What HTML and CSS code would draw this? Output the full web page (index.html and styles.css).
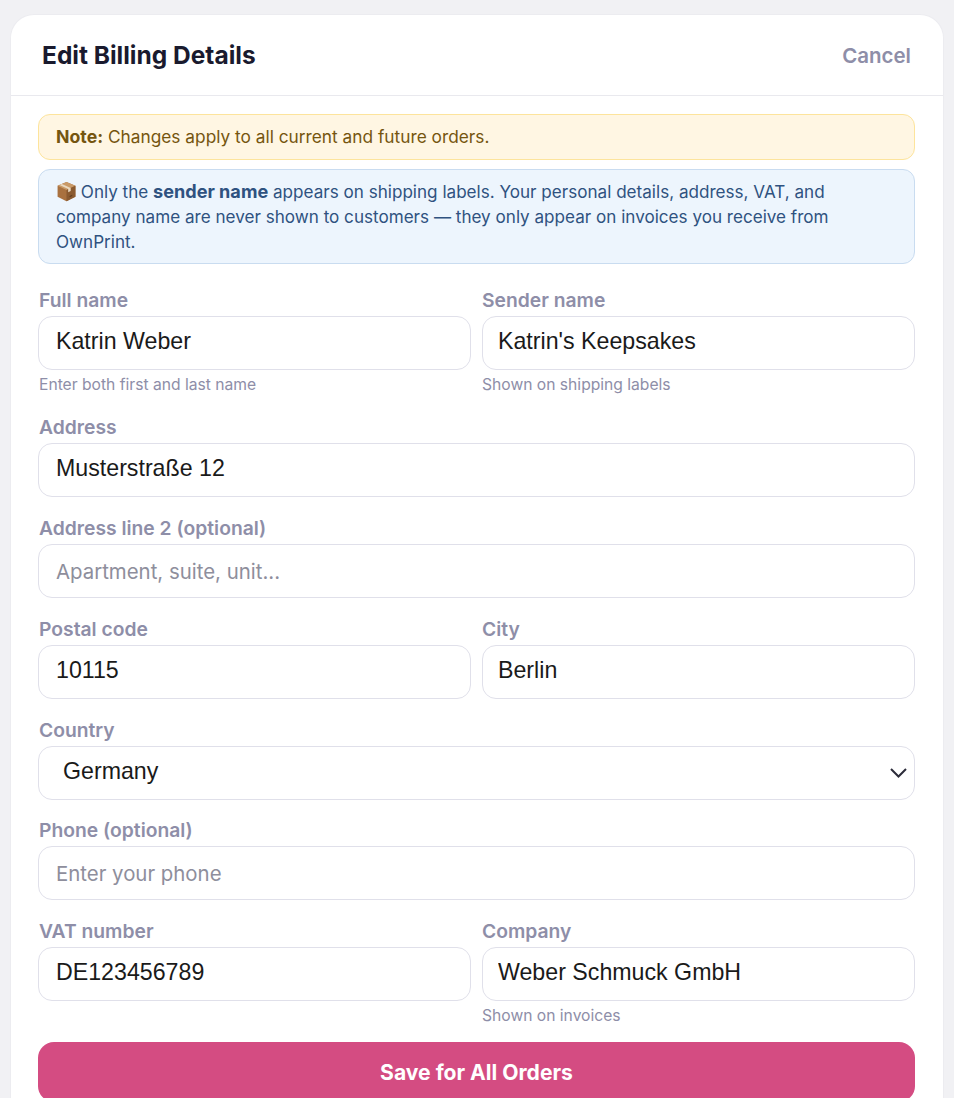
FILE: index.html
```html
<!DOCTYPE html>
<html lang="en">
<head>
<meta charset="utf-8">
<title>Edit Billing Details</title>
<link rel="stylesheet" href="styles.css">
</head>
<body>
<main class="card">
  <header class="head">
    <h1 class="title">Edit Billing Details</h1>
    <button class="cancel" type="button">Cancel</button>
  </header>
  <form class="body">
    <p class="note"><strong>Note:</strong> Changes apply to all current and future orders.</p>
    <p class="info"><svg class="box" viewBox="0 0 20 20" aria-hidden="true"><path d="M10 1 18.5 4.6V15L10 19.4 1.5 15V4.6Z" fill="#a9713f"/><path d="M10 1 18.5 4.6 10 8.6 1.5 4.6Z" fill="#c99a68"/><path d="M10 8.6 18.5 4.6V15L10 19.4Z" fill="#8a5a30"/><path d="M5.6 2.8 14 6.7V9.6L11.6 10.7V7.6L3.4 3.7Z" fill="#ead9c0"/><path d="M13 15.5l2.5-1.2v-1.2L13 14.3Z" fill="#5f3c1f"/></svg> Only the <strong>sender name</strong> appears on shipping labels. Your personal details, address, VAT, and company name are never shown to customers — they only appear on invoices you receive from OwnPrint.</p>

    <div class="row two">
      <div class="field"><label class="label">Full name</label><input class="input" value="Katrin Weber"><small class="hint">Enter both first and last name</small></div>
      <div class="field"><label class="label">Sender name</label><input class="input" value="Katrin's Keepsakes"><small class="hint">Shown on shipping labels</small></div>
    </div>
    <div class="row"><div class="field"><label class="label">Address</label><input class="input" value="Musterstraße 12"></div></div>
    <div class="row"><div class="field"><label class="label">Address line 2 (optional)</label><input class="input" placeholder="Apartment, suite, unit..."></div></div>
    <div class="row two">
      <div class="field"><label class="label">Postal code</label><input class="input" value="10115"></div>
      <div class="field"><label class="label">City</label><input class="input" value="Berlin"></div>
    </div>
    <div class="row tight"><div class="field"><label class="label">Country</label>
      <div class="select-wrap"><select class="input select"><option>Germany</option></select>
      <svg class="chev" viewBox="0 0 17 10" aria-hidden="true"><path d="M1 1 8.5 8.5 16 1" fill="none" stroke="#2c2c3a" stroke-width="2"/></svg></div></div></div>
    <div class="row"><div class="field"><label class="label">Phone (optional)</label><input class="input" placeholder="Enter your phone"></div></div>
    <div class="row two last">
      <div class="field"><label class="label">VAT number</label><input class="input" value="DE123456789"></div>
      <div class="field"><label class="label">Company</label><input class="input" value="Weber Schmuck GmbH"><small class="hint">Shown on invoices</small></div>
    </div>
    <button class="save" type="button">Save for All Orders</button>
  </form>
</main>
</body>
</html>
```
FILE: styles.css
```css
* { box-sizing: border-box; }
html, body { margin: 0; height: 1098px; overflow: hidden; }
body {
  background: #f1f1f4;
  padding: 14px 10px 0;
  font-family: Inter, "Liberation Sans", sans-serif;
}
.card {
  background: #fff;
  border: 1px solid #ececf0;
  border-bottom: 0;
  border-radius: 24px 24px 0 0;
  height: 1100px;
}
.head {
  display: flex;
  justify-content: space-between;
  align-items: center;
  height: 81px;
  padding: 0 32px 0 31px;
  border-bottom: 1px solid #e9e9ee;
}
.title { margin: 0; font-size: 24.5px; font-weight: 700; color: #1a1a2e; }
.cancel {
  border: 0; background: none; padding: 0;
  font: 600 20.5px Inter, sans-serif; color: #8e8ea8;
}
.body { padding: 18px 28px 0 27px; }
.note, .info {
  margin: 0;
  border-radius: 12px;
  line-height: 25px;
  padding: 9px 17px;
}
.note {
  height: 46px;
  font-size: 17.3px;
  background: #fff6e3;
  border: 1px solid #fde49c;
  color: #75550f;
  margin-bottom: 9px;
}
.note strong { font-size: 17.7px; }
.info {
  height: 95px;
  font-size: 17.1px;
  background: #edf5fd;
  border: 1px solid #c9dcf0;
  color: #2f5280;
  margin-bottom: 26px;
}
.info strong { font-size: 18.1px; }
.box { width: 21px; height: 21px; vertical-align: -4px; margin-right: -1px; }
.row { display: flex; gap: 11px; margin-bottom: 21px; }
.row.tight { margin-bottom: 20px; }
.row.last { margin-bottom: 15px; }
.field { flex: 1 1 0; min-width: 0; display: flex; flex-direction: column; }
.label {
  font-size: 19.3px; font-weight: 600; color: #8e8ea8;
  line-height: 21px; margin: 0 0 5px 1px;
}
.two .field + .field .label, .two .field + .field .hint { margin-left: 0; }
.input {
  width: 100%;
  height: 54px;
  border: 1px solid #e0e0ea;
  border-radius: 14px;
  background: #fff;
  padding: 0 17px 3px;
  font: 23.2px "Liberation Sans", Arial, sans-serif;
  color: #1a1a1a;
  outline: 0;
}
.two .field + .field .input { padding-left: 15px; }
.input:placeholder-shown { padding-bottom: 0; }
.input::placeholder { color: #8e8e9c; font-family: Inter, sans-serif; font-size: 20.4px; opacity: 1; }
.hint {
  font-size: 15.65px; color: #8e8ea8; line-height: 18px;
  margin: 6px 0 2px 1px;
}
.select-wrap { position: relative; }
.select { appearance: none; -webkit-appearance: none; padding: 0 17px 5px 24px; display: block; }
.chev { position: absolute; right: 8px; top: 22px; width: 17px; height: 10px; }
.save {
  display: block;
  width: 100%;
  height: 60px;
  border: 0;
  border-radius: 16px;
  background: #d44c82;
  color: #fff;
  font: 700 21.1px Inter, sans-serif;
}
```
